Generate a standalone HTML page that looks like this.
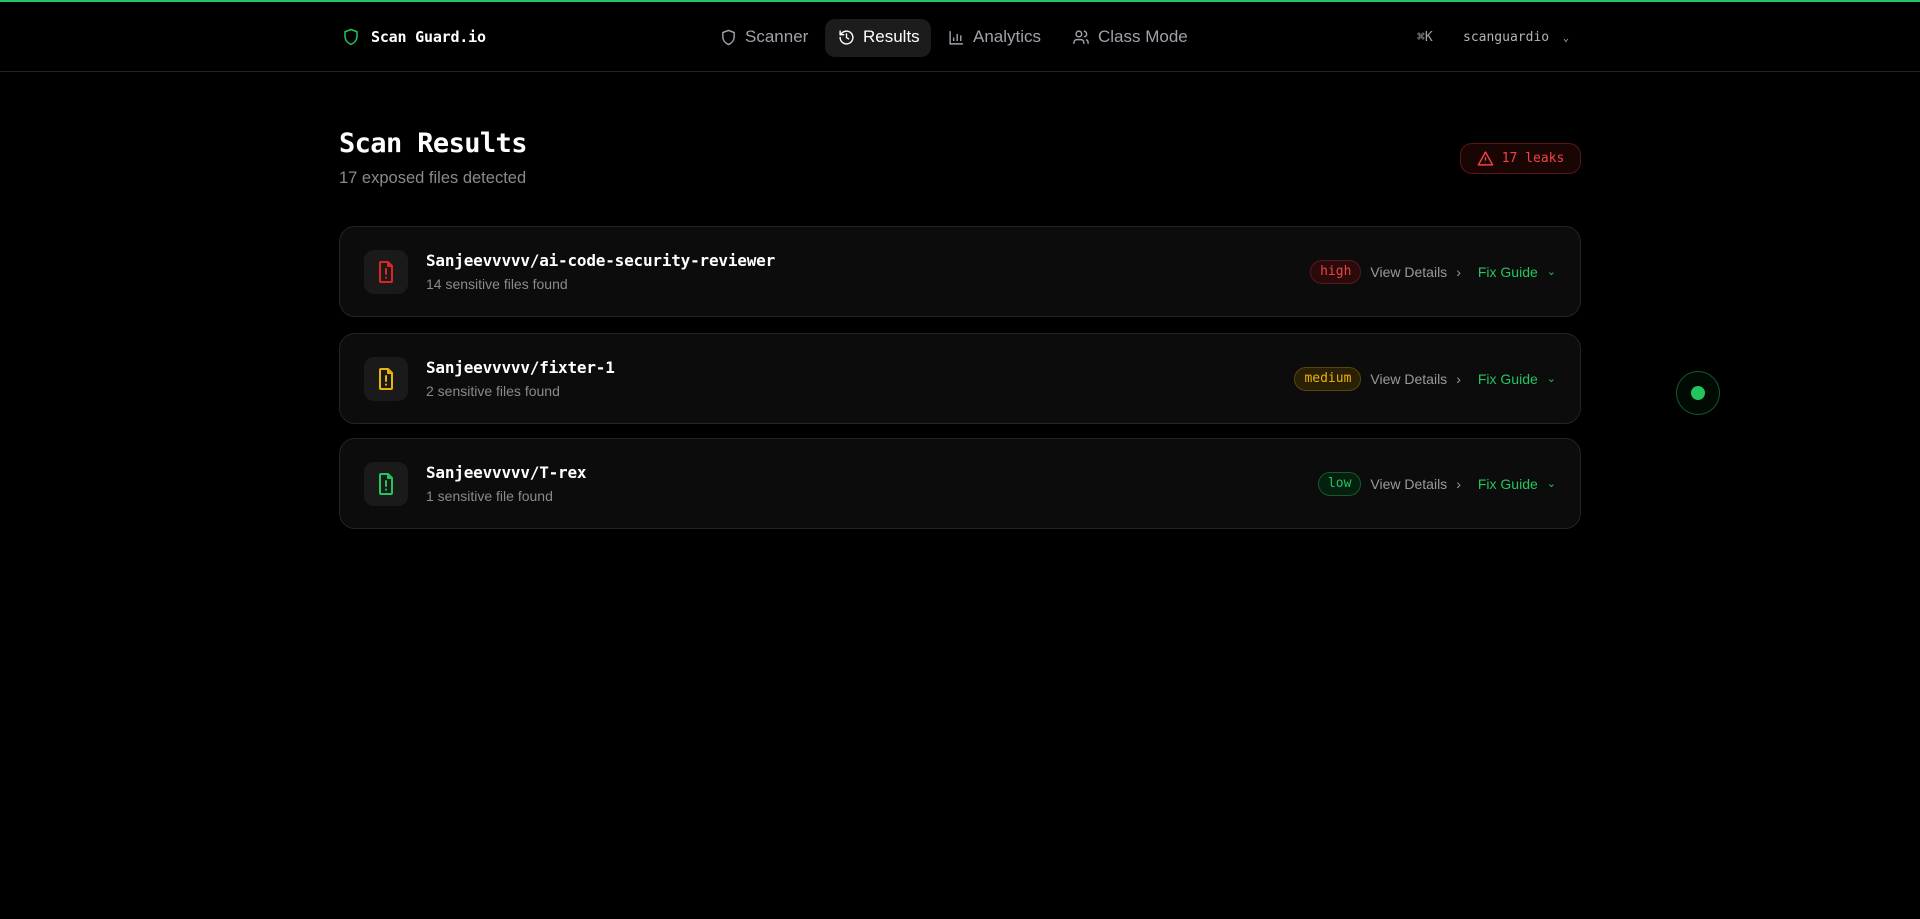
<!DOCTYPE html>
<html><head><meta charset="utf-8"><style>
*{box-sizing:border-box;margin:0;padding:0}
body{width:1920px;height:919px;background:#000;font-family:"Liberation Sans",sans-serif;color:#fff;position:relative;overflow:hidden}
.top{position:absolute;left:0;top:0;width:1920px;height:2px;background:#22c55e}
.hdr{position:absolute;left:0;top:2px;width:1920px;height:70px;border-bottom:1px solid #222}
.mono{font-family:"DejaVu Sans Mono","Liberation Mono",monospace}
.abs{position:absolute}
.nav{font-size:17px;color:#a1a1aa;display:flex;align-items:center;gap:8px}
.pill{position:absolute;left:825px;top:17px;width:106px;height:38px;background:#1c1c1c;border-radius:10px}
.card{position:absolute;left:339px;width:1242px;height:91px;background:#0c0c0c;border:1px solid #242424;border-radius:16px}
.ib{position:absolute;left:24px;top:23px;width:44px;height:44px;background:#1a1a1a;border-radius:10px;display:flex;align-items:center;justify-content:center}
.ct{position:absolute;left:86px;top:24px;font-size:16px;font-weight:bold;letter-spacing:-0.2px}
.cs{position:absolute;left:86px;top:49px;font-size:14px;color:#8a8a8a}
.right{position:absolute;right:24px;top:0;height:89px;display:flex;align-items:center;gap:9px;font-size:14px}
.badge{height:24px;border-radius:12px;padding:0 9px;display:flex;align-items:center;font-size:13px}
.vd{color:#9a9a9a;display:flex;align-items:center;gap:9px;margin-right:8px}
.fg{color:#22c55e;display:flex;align-items:center;gap:9px}
</style></head><body>
<div class="top"></div>
<div class="hdr">
 <svg class="abs" style="left:342px;top:24px" width="18" height="22" viewBox="0 0 24 24" fill="none" stroke="#22c55e" stroke-width="2" stroke-linejoin="round"><path d="M12 2l8 3v6c0 5-3.5 9-8 11-4.5-2-8-6-8-11V5z"/></svg>
 <div class="abs mono" style="left:371px;top:26px;font-size:15px;font-weight:bold;letter-spacing:-0.2px">Scan Guard.io</div>
 <div class="pill"></div>
 <div class="abs nav" style="left:720px;top:25px"><svg width="17" height="17" viewBox="0 0 24 24" fill="none" stroke="#a1a1aa" stroke-width="2"><path d="M12 2l8 3v6c0 5-3.5 9-8 11-4.5-2-8-6-8-11V5z"/></svg>Scanner</div>
 <div class="abs nav" style="left:838px;top:25px;color:#fff"><svg width="17" height="17" viewBox="0 0 24 24" fill="none" stroke="#fff" stroke-width="2" stroke-linecap="round"><path d="M3 12a9 9 0 1 0 3-6.7L3 8M3 3v5h5M12 7v5l3 2"/></svg>Results</div>
 <div class="abs nav" style="left:948px;top:25px"><svg width="17" height="17" viewBox="0 0 24 24" fill="none" stroke="#a1a1aa" stroke-width="2"><path d="M3 3v18h18M8 17v-5M13 17V7M18 17v-8"/></svg>Analytics</div>
 <div class="abs nav" style="left:1072px;top:25px"><svg width="18" height="17" viewBox="0 0 24 24" fill="none" stroke="#a1a1aa" stroke-width="2"><circle cx="9" cy="7" r="4"/><path d="M2 21v-2a4 4 0 0 1 4-4h6a4 4 0 0 1 4 4v2M16 3a4 4 0 0 1 0 8M22 21v-2a4 4 0 0 0-3-3.9"/></svg>Class Mode</div>
 <div class="abs mono" style="left:1417px;top:28px;font-size:13px;color:#a1a1aa">⌘K</div>
 <div class="abs mono" style="left:1463px;top:28px;font-size:13px;color:#b4b4b4">scanguardio <span style="margin-left:6px;font-size:10px">⌄</span></div>
</div>
<div class="abs mono" style="left:339px;top:128px;font-size:27px;font-weight:bold;letter-spacing:-0.6px">Scan Results</div>
<div class="abs" style="left:339px;top:169px;font-size:16.5px;color:#8a8a8a">17 exposed files detected</div>
<div class="abs mono" style="left:1460px;top:143px;width:121px;height:31px;border:1px solid #5a1515;background:#1a0505;border-radius:12px;color:#ef4444;font-size:13px;display:flex;align-items:center;justify-content:center;gap:8px"><svg width="17" height="17" viewBox="0 0 24 24" fill="none" stroke="#ef4444" stroke-width="2" stroke-linejoin="round"><path d="M12 3L2 21h20zM12 10v5M12 18v.5"/></svg>17 leaks</div>

<div class="card" style="top:226px">
 <div class="ib"><svg width="24" height="26" viewBox="0 0 24 24" fill="none" stroke="#dc2626" stroke-width="2" stroke-linejoin="round" stroke-linecap="round"><path d="M14 2H7a1 1 0 0 0-1 1v18a1 1 0 0 0 1 1h10a1 1 0 0 0 1-1V6zM14 2v4h4M12 9v5M12 17.5v.3"/></svg></div>
 <div class="ct mono">Sanjeevvvvv/ai-code-security-reviewer</div><div class="cs">14 sensitive files found</div>
 <div class="right"><div class="badge mono" style="color:#ef4444;background:#2a0a0a;border:1px solid #5a1818">high</div><div class="vd">View Details <span>›</span></div><div class="fg">Fix Guide <span style="font-size:11px">⌄</span></div></div>
</div>
<div class="card" style="top:333px">
 <div class="ib"><svg width="24" height="26" viewBox="0 0 24 24" fill="none" stroke="#eab308" stroke-width="2" stroke-linejoin="round" stroke-linecap="round"><path d="M14 2H7a1 1 0 0 0-1 1v18a1 1 0 0 0 1 1h10a1 1 0 0 0 1-1V6zM14 2v4h4M12 9v5M12 17.5v.3"/></svg></div>
 <div class="ct mono">Sanjeevvvvv/fixter-1</div><div class="cs">2 sensitive files found</div>
 <div class="right"><div class="badge mono" style="color:#eab308;background:#2a2005;border:1px solid #5a4510">medium</div><div class="vd">View Details <span>›</span></div><div class="fg">Fix Guide <span style="font-size:11px">⌄</span></div></div>
</div>
<div class="card" style="top:438px">
 <div class="ib"><svg width="24" height="26" viewBox="0 0 24 24" fill="none" stroke="#22c55e" stroke-width="2" stroke-linejoin="round" stroke-linecap="round"><path d="M14 2H7a1 1 0 0 0-1 1v18a1 1 0 0 0 1 1h10a1 1 0 0 0 1-1V6zM14 2v4h4M12 9v5M12 17.5v.3"/></svg></div>
 <div class="ct mono">Sanjeevvvvv/T-rex</div><div class="cs">1 sensitive file found</div>
 <div class="right"><div class="badge mono" style="color:#22c55e;background:#06200f;border:1px solid #145a2a">low</div><div class="vd">View Details <span>›</span></div><div class="fg">Fix Guide <span style="font-size:11px">⌄</span></div></div>
</div>
<div class="abs" style="left:1676px;top:371px;width:44px;height:44px;border:1px solid #145a2a;border-radius:50%;background:#020a04"><div class="abs" style="left:14px;top:14px;width:14px;height:14px;border-radius:50%;background:#22c55e"></div></div>
</body></html>
